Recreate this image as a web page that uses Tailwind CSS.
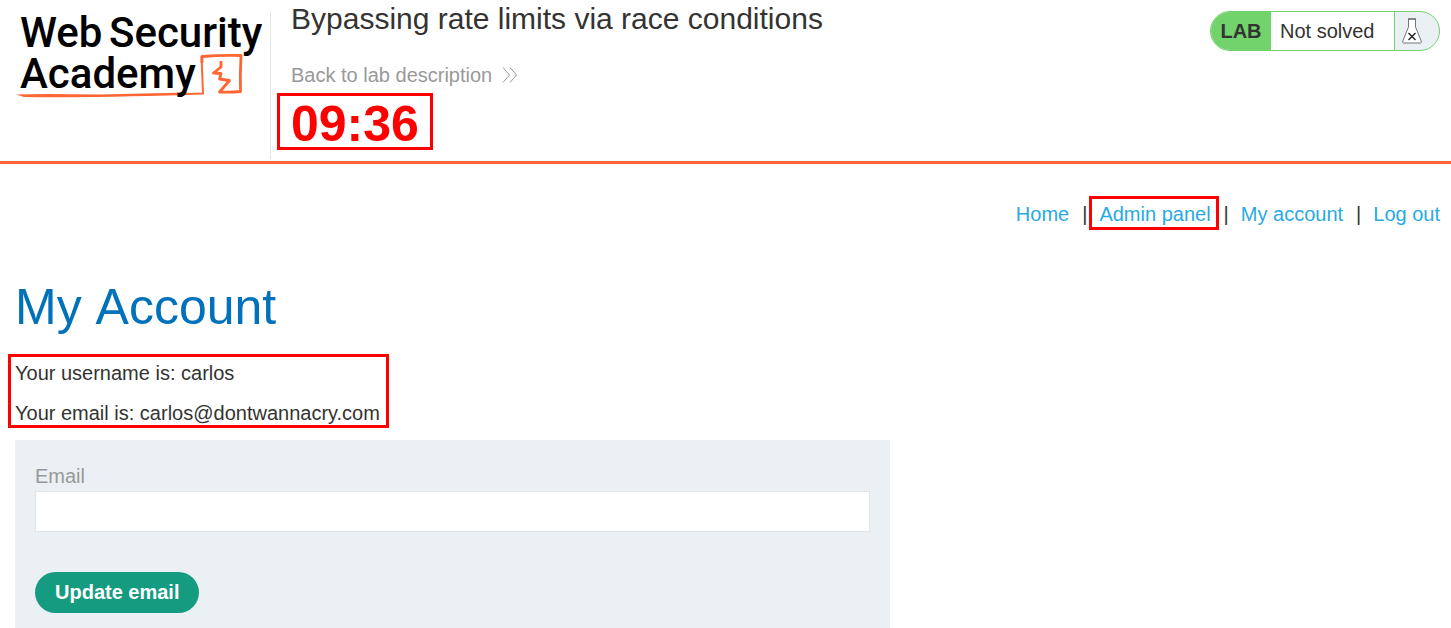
<!DOCTYPE html>
<html lang="en">
<head>
<meta charset="utf-8">
<meta name="viewport" content="width=device-width, initial-scale=1">
<title>Bypassing rate limits via race conditions</title>
<script src="https://cdn.jsdelivr.net/npm/@tailwindcss/browser@4"></script>
</head>
<body class="bg-white font-['Liberation_Sans',Arial,sans-serif] text-xl text-[#333332]">
<header class="flex items-start border-b-3 border-[#ff6633] pr-[11px]">
  <a href="#" aria-label="Web Security Academy" class="mt-[11px] mb-[2px] h-37 shrink-0 border-r border-[#e4e4e4] pr-1 pl-4">
    <svg width="250" height="92" viewBox="16 11 250 92" fill="none" overflow="visible">
      <path d="M185 94 L203 93.500 L201.500 56.500" stroke="#ff6633" stroke-width="2"/>
      <path d="M202 63 L202 56.500 Q221 55 241 55.500 Q240 74 240.500 91.500 Q231 92.500 219.500 92 L229.500 80.500 L219.500 79 L221 73.500 L213.500 73 L221 67 V61" stroke="#ff6633" stroke-width="2.800" stroke-linejoin="round"/>
      <path d="M16 94.500 Q40 93.500 100 94.500 L187 92.500 V95 Q80 98 24 97 Z" fill="#ff6633"/>
      <g fill="#000" font-family="Roboto, sans-serif" font-weight="500" font-size="42">
        <text x="20" y="47">Web</text>
        <text x="109" y="47">Security</text>
        <text x="20" y="88">Academy</text>
      </g>
    </svg>
  </a>
  <div class="min-w-0 flex-1 pl-5">
    <h2 class="text-[30px] leading-[38px]">Bypassing rate limits via race conditions</h2>
    <a href="#" class="mt-[25px] flex w-fit items-center gap-[10px] leading-6 text-[#999999]">Back to lab description
      <svg width="16" height="16" viewBox="0 0 16 16" fill="none" stroke="#999" stroke-width="1"><path d="M1 .5 7.500 8 1 15.500M8 .5 14.500 8 8 15.500"/></svg>
    </a>
    <p class="relative mt-[9px] w-fit text-[50px] leading-14 font-bold text-[#ff0000]">09:36
      <span class="absolute -inset-x-[14px] -top-[3px] bottom-[2px] border-3 border-[#ff0000]"></span>
    </p>
  </div>
  <div class="mt-[11px] flex h-10 shrink-0 overflow-hidden rounded-full border border-[#72d36d] bg-[#eaf0f3]">
    <span class="flex w-15 items-center justify-center bg-[#72d36d] font-bold">LAB</span>
    <p class="flex w-31 items-center border-r border-[#72d36d] bg-white pl-[9px]">Not solved</p>
    <span class="flex w-11 items-center pl-[7px]">
      <svg width="20" height="26" viewBox="0 0 20 26" fill="#fff" stroke="#777" stroke-width="1">
        <path d="M6.500 1V9L.8 23Q.2 25 1.500 25H18.500Q19.800 25 19.200 23L13.500 9V1Z"/>
        <path d="M6 1H14" stroke="#555" stroke-width="1.200"/>
        <path d="M6.500 15 13.500 22M13.500 15 6.500 22" stroke="#222" stroke-width="1.400"/>
      </svg>
    </span>
  </div>
</header>
<main>
  <nav class="mt-[38px] flex justify-end gap-3 pr-[11px] leading-6 text-[#29aae2]">
    <a href="#">Home</a><span class="pl-px text-[#333332]">|</span>
    <a href="#" class="relative">Admin panel<span class="absolute -top-[6px] -right-2 -bottom-1 -left-[10px] border-3 border-[#ff0000]"></span></a><span class="pl-px text-[#333332]">|</span>
    <a href="#">My account</a><span class="pl-px text-[#333332]">|</span>
    <a href="#">Log out</a>
  </nav>
  <div class="pl-[15px]">
    <h1 class="mt-[51px] text-[50px] leading-15 text-[#0071bb] [font-kerning:none]">My Account</h1>
    <div class="relative mt-6 flex w-fit flex-col gap-4 leading-6">
      <p>Your username is: carlos</p>
      <p>Your email is: carlos@dontwannacry.com</p>
      <span class="absolute -top-[7px] -right-[9px] -bottom-[3px] -left-[7px] border-3 border-[#ff0000]"></span>
    </div>
    <form class="mt-[15px] max-w-[875px] bg-[#eaf0f3] px-5 pt-6 pb-[15px]">
      <label for="email" class="block leading-6 text-[#999999]">Email</label>
      <input id="email" type="email" class="mt-[3px] block h-[41px] w-full border border-[#e4e4e4] bg-white px-3 outline-none">
      <button type="submit" class="mt-10 block h-[41px] rounded-full bg-[#159b80] px-5 pb-0.5 font-bold text-white">Update email</button>
    </form>
  </div>
</main>
</body>
</html>
